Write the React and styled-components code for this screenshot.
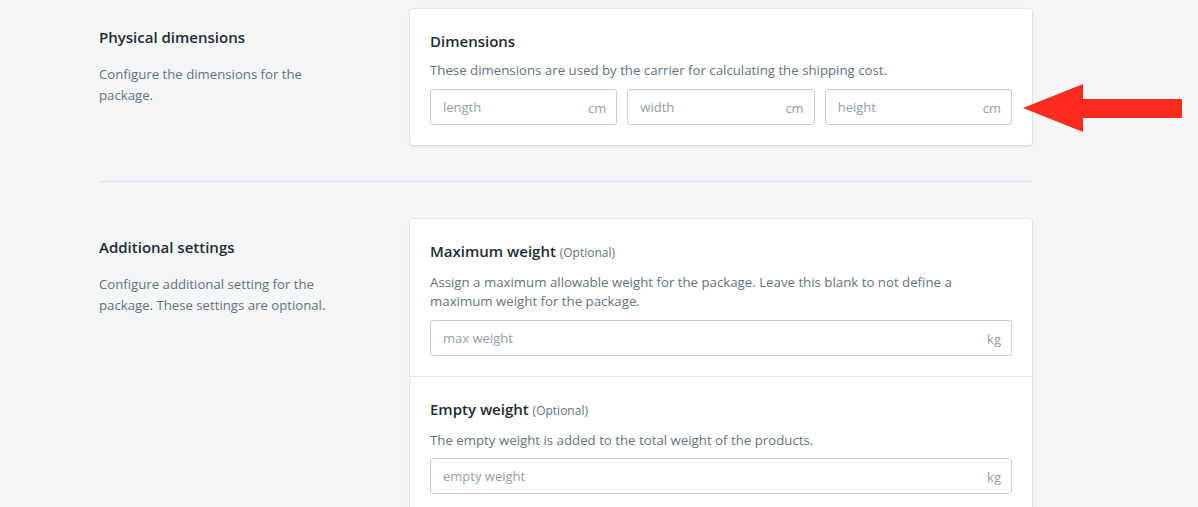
import React from 'react'
import styled, { createGlobalStyle } from 'styled-components'

const Global = createGlobalStyle`
  html, body {
    margin: 0;
    background: #f4f6f8;
    font-family: "Open Sans", "Noto Sans", sans-serif;
    color: #212b36;
    overflow: hidden;
  }
`

const Page = styled.div`
  position: relative;
  width: 1198px;
  height: 507px;
  padding: 9px 0 0 99px;
  box-sizing: border-box;
`

const Container = styled.div`
  width: 933px;
`

const Section = styled.div`
  display: grid;
  grid-template-columns: 311px 622px;
  padding: ${({ first }) => (first ? '0 0 36px' : '37px 0 0')};
  border-bottom: ${({ first }) => (first ? '1px solid #dfe3e8' : 'none')};
`

const Annotation = styled.div`
  padding-top: 18px;
  max-width: 245px;
`

const AnnTitle = styled.h2`
  margin: 0;
  font-size: 15px;
  line-height: 20px;
  font-weight: 600;
  color: #212b36;
`

const AnnText = styled.p`
  margin: 17px 0 0;
  font-size: 13.2px;
  line-height: 21px;
  color: #637381;
`

const Card = styled.div`
  background: #fff;
  border-radius: 3px;
  box-shadow: 0 0 0 1px rgba(63, 63, 68, 0.05), 0 1px 3px 0 rgba(63, 63, 68, 0.15);
`

const CardSection = styled.div`
  padding: 20px;
  & + & {
    border-top: 1px solid #dfe3e8;
  }
`

const Heading = styled.h3`
  margin: 0;
  font-size: 15px;
  line-height: 24px;
  font-weight: 600;
  color: #212b36;
`

const Optional = styled.span`
  font-size: 12px;
  font-weight: 400;
  color: #637381;
`

const Help = styled.p`
  margin: 8px 0 8px;
  font-size: 13.25px;
  line-height: 19.5px;
  color: #637381;
`

const Row = styled.div`
  display: grid;
  grid-template-columns: repeat(${({ cols }) => cols}, minmax(0, 1fr));
  gap: 10px;
`

const Field = styled.label`
  display: flex;
  align-items: center;
  height: 36px;
  box-sizing: border-box;
  border: 1px solid #c4cdd5;
  border-radius: 3px;
  padding: 0 10px 0 12px;
  background: #fff;
`

const Input = styled.input`
  flex: 1;
  min-width: 0;
  width: 0;
  border: 0;
  outline: none;
  background: transparent;
  font-family: inherit;
  font-size: 13px;
  color: #212b36;
  padding: 0;
  &::placeholder {
    color: #919eab;
  }
`

const Suffix = styled.span`
  font-size: 13px;
  color: #919eab;
  padding-top: 2px;
`

const Arrow = styled.svg`
  position: absolute;
  left: 1020px;
  top: 80px;
`

const TextField = ({ placeholder, suffix }) => (
  <Field>
    <Input placeholder={placeholder} />
    <Suffix>{suffix}</Suffix>
  </Field>
)

export default function App() {
  return (
    <>
      <Global />
      <Page>
        <Container>
          <Section first>
            <Annotation>
              <AnnTitle>Physical dimensions</AnnTitle>
              <AnnText>Configure the dimensions for the package.</AnnText>
            </Annotation>
            <Card>
              <CardSection>
                <Heading>Dimensions</Heading>
                <Help>These dimensions are used by the carrier for calculating the shipping cost.</Help>
                <Row cols={3}>
                  <TextField placeholder="length" suffix="cm" />
                  <TextField placeholder="width" suffix="cm" />
                  <TextField placeholder="height" suffix="cm" />
                </Row>
              </CardSection>
            </Card>
          </Section>
          <Section>
            <Annotation>
              <AnnTitle>Additional settings</AnnTitle>
              <AnnText>Configure additional setting for the package. These settings are optional.</AnnText>
            </Annotation>
            <Card>
              <CardSection>
                <Heading>
                  Maximum weight <Optional>(Optional)</Optional>
                </Heading>
                <Help>
                  Assign a maximum allowable weight for the package. Leave this blank to not define a maximum weight for the package.
                </Help>
                <Row cols={1}>
                  <TextField placeholder="max weight" suffix="kg" />
                </Row>
              </CardSection>
              <CardSection>
                <Heading>
                  Empty weight <Optional>(Optional)</Optional>
                </Heading>
                <Help>The empty weight is added to the total weight of the products.</Help>
                <Row cols={1}>
                  <TextField placeholder="empty weight" suffix="kg" />
                </Row>
              </CardSection>
            </Card>
          </Section>
        </Container>
        <Arrow width="165" height="56" viewBox="1020 80 165 56">
          <polygon
            points="1023,108 1083,84 1083,99 1182,99 1182,118 1083,118 1083,132"
            fill="#fe2b1f"
          />
        </Arrow>
      </Page>
    </>
  )
}
